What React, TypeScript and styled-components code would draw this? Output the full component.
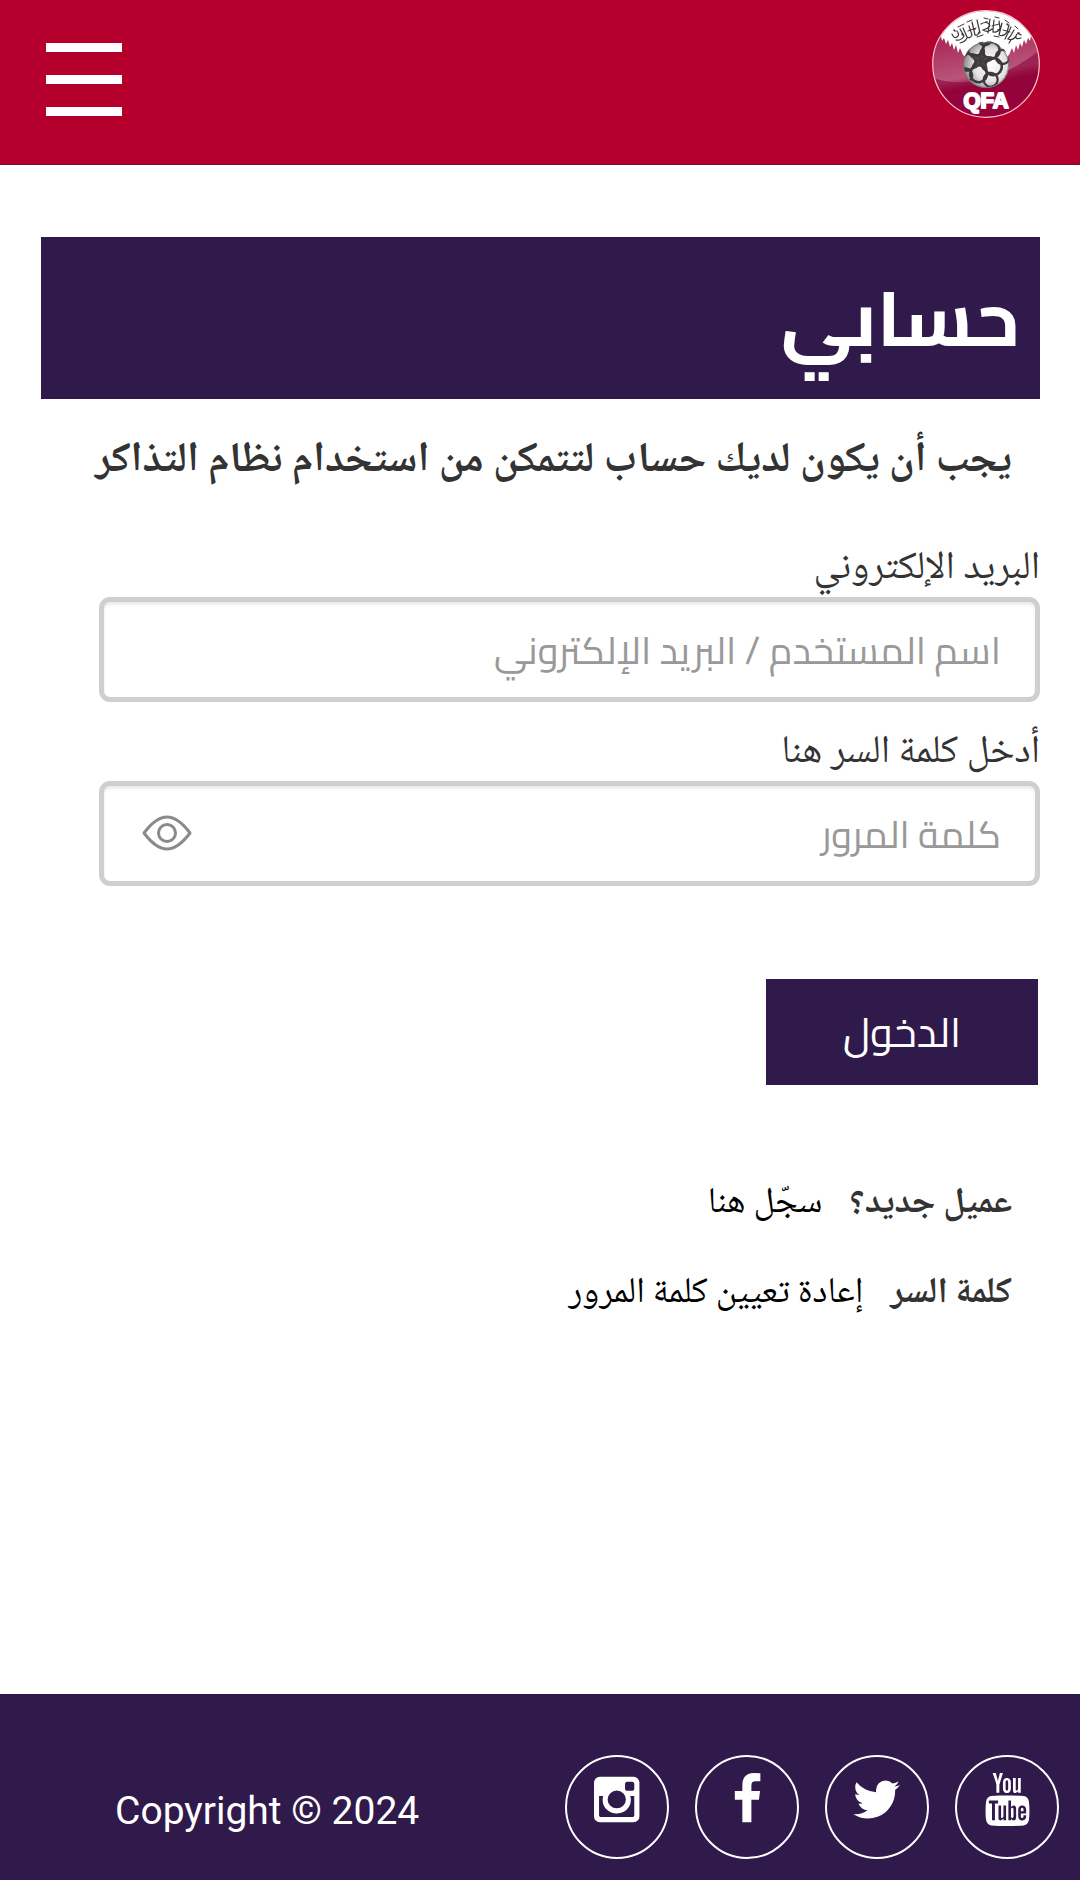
import React, { useState } from "react";
import styled, { createGlobalStyle } from "styled-components";
import { TfiYoutube } from "react-icons/tfi";

const naskh = `"Noto Naskh Arabic", "Noto Sans Arabic", "DejaVu Sans", sans-serif`;
const cairo = `Cairo, "Noto Sans Arabic", "DejaVu Sans", sans-serif`;

const color = {
  red: "#b5002d",
  purple: "#301a4b",
  text: "#333333",
  border: "#cfcfcf",
  hint: "#999999",
};

const GlobalStyle = createGlobalStyle`
  *, *::before, *::after { box-sizing: border-box; }
  body { margin: 0; background: #ffffff; color: ${color.text}; font-family: ${naskh}; }
`;

const Page = styled.div`
  display: flex;
  flex-direction: column;
  min-height: 100vh;
`;

const Header = styled.header`
  display: flex;
  flex-direction: row-reverse;
  justify-content: space-between;
  align-items: flex-start;
  height: 165px;
  padding: 10px 40px 0 46px;
  background: ${color.red};
  border-bottom: 1px solid #720d3c;
`;

const MenuButton = styled.button`
  display: flex;
  flex-direction: column;
  gap: 23px;
  width: 76px;
  margin-top: 33px;
  padding: 0;
  border: 0;
  background: none;
  cursor: pointer;
`;

const MenuBar = styled.span`
  width: 100%;
  height: 9px;
  background: #ffffff;
`;

const LogoLink = styled.a`
  display: block;
  width: 108px;
  height: 108px;

  svg { display: block; width: 100%; height: 100%; }
`;

const Main = styled.main`
  flex: 1;
  padding: 72px 40px 80px 41px;
`;

const Title = styled.h1`
  margin: 0;
  padding: 0 20px;
  background: ${color.purple};
  color: #ffffff;
  font: 700 77px/162px ${cairo};
`;

const Intro = styled.p`
  margin: 31px 28px 49px 0;
  font-size: 42px;
  line-height: 64px;
  font-weight: 700;
`;

const Form = styled.form`
  display: flex;
  flex-direction: column;
  padding-left: 58px;
`;

const Field = styled.div`
  position: relative;
  display: flex;
  flex-direction: column;
  margin-bottom: 25px;
`;

const Label = styled.label`
  font-size: 39px;
  line-height: 54px;
`;

const Input = styled.input`
  width: 100%;
  height: 105px;
  padding: 0 34px;
  border: 5px solid ${color.border};
  border-radius: 11px;
  background: #ffffff;
  box-shadow: inset 0 3px 3px rgba(0, 0, 0, 0.08);
  color: ${color.text};
  font: 400 38px/56px ${cairo};

  &::placeholder { color: ${color.hint}; opacity: 1; }
`;

const RevealButton = styled.button`
  position: absolute;
  left: 42px;
  bottom: 34px;
  padding: 0;
  border: 0;
  background: none;
  cursor: pointer;

  svg { display: block; }
`;

const Submit = styled.button`
  align-self: flex-start;
  height: 106px;
  margin: 68px 2px 0 0;
  padding: 0 77px;
  border: 0;
  background: ${color.purple};
  color: #ffffff;
  font: 400 41px/76px ${cairo};
  cursor: pointer;
`;

const Links = styled.div`
  display: flex;
  flex-direction: column;
  gap: 30px;
  margin-top: 90px;
  padding-right: 28px;
`;

const LinkRow = styled.p`
  display: flex;
  gap: 27px;
  margin: 0;
  font-size: 36px;
  line-height: 60px;

  a { color: #000000; text-decoration: none; }
`;

const Footer = styled.footer`
  display: flex;
  flex-direction: row-reverse;
  align-items: center;
  justify-content: space-between;
  padding: 61px 21px 21px 115px;
  background: ${color.purple};
  color: #ffffff;
`;

const Copyright = styled.p`
  margin: 0;
  padding-top: 8px;
  font: 400 39px/48px Roboto, "Liberation Sans", sans-serif;
`;

const Social = styled.nav`
  display: flex;
  gap: 26px;
`;

const SocialLink = styled.a`
  display: flex;
  justify-content: center;
  width: 104px;
  height: 104px;
  padding-top: 16px;
  border: 2px solid #ffffff;
  border-radius: 50%;
  color: #ffffff;

  svg { display: block; height: 53px; fill: currentColor; }
`;

/* Icon glyphs are drawn on a 1792-unit em with the y axis pointing up. */
function Glyph({ width, d }: { width: number; d: string }) {
  return (
    <svg viewBox={`0 -1536 ${width} 1792`} aria-hidden="true">
      <path transform="scale(1 -1)" d={d} />
    </svg>
  );
}

const instagram =
  "M1362 110v648h-135q20 -63 20 -131q0 -126 -64 -232.5t-174 -168.5t-240 -62q-197 0 -337 135.5t-140 327.5q0 68 20 131h-141v-648q0 -26 17.5 -43.5t43.5 -17.5h1069q25 0 43 17.5t18 43.5zM1078 643q0 124 -90.5 211.5t-218.5 87.5q-127 0 -217.5 -87.5t-90.5 -211.5t90.5 -211.5t217.5 -87.5q128 0 218.5 87.5t90.5 211.5zM1362 1003v165q0 28 -20 48.5t-49 20.5h-174q-29 0 -49 -20.5t-20 -48.5v-165q0 -29 20 -49t49 -20h174q29 0 49 20t20 49zM1536 1211v-1142q0 -81 -58 -139t-139 -58h-1142q-81 0 -139 58t-58 139v1142q0 81 58 139t139 58h1142q81 0 139 -58t58 -139z";
const facebook =
  "M959 1524v-264h-157q-86 0 -116 -36t-30 -108v-189h293l-39 -296h-254v-759h-306v759h-255v296h255v218q0 186 104 288.5t277 102.5q147 0 228 -12z";
const twitter =
  "M1620 1128q-67 -98 -162 -167q1 -14 1 -42q0 -130 -38 -259.5t-115.5 -248.5t-184.5 -210.5t-258 -146t-323 -54.5q-271 0 -496 145q35 -4 78 -4q225 0 401 138q-105 2 -188 64.5t-114 159.5q33 -5 61 -5q43 0 85 11q-112 23 -185.5 111.5t-73.5 205.5v4q68 -38 146 -41q-66 44 -105 115t-39 154q0 88 44 163q121 -149 294.5 -238.5t371.5 -99.5q-8 38 -8 74q0 134 94.5 228.5t228.5 94.5q140 0 236 -102q109 21 205 78q-37 -115 -142 -178q93 10 186 50z";

function Crest() {
  const petals = [-72, 0, 72, 144, 216].map((deg) => {
    const a = (deg * Math.PI) / 180;
    return { deg, cos: Math.cos(a), sin: Math.sin(a) };
  });
  return (
    <svg viewBox="0 0 108 108" role="img" aria-label="QFA">
      <defs>
        <linearGradient id="shade" x1="0.3" y1="0" x2="0.5" y2="1">
          <stop offset="0.15" stopColor="#a8204f" />
          <stop offset="0.6" stopColor="#b8557a" />
          <stop offset="0.7" stopColor="#96063d" />
          <stop offset="1" stopColor="#a4043f" />
        </linearGradient>
        <radialGradient id="ball" cx="0.6" cy="0.5" r="0.6">
          <stop offset="0" stopColor="#ffffff" />
          <stop offset="0.6" stopColor="#e2e2e2" />
          <stop offset="1" stopColor="#8b8587" />
        </radialGradient>
        <clipPath id="disc"><circle cx="54" cy="54" r="53" /></clipPath>
        <clipPath id="ballEdge"><circle cx="54" cy="55" r="23" /></clipPath>
      </defs>
      <circle cx="54" cy="54" r="53" fill="url(#shade)" />
      <g clipPath="url(#disc)">
        <path d="M0 68 Q52 84 108 40 V108 H0 Z" fill="#8e0339" opacity="0.6" />
        <path
          d="M0 20 L9 26 L10 31 L12 28 L14 34 L16 30 L18 37 L20 33 L22 40 L24 35 L26 43 L28 38 L31 45 L54 60 L77 45 L80 38 L82 43 L84 35 L86 40 L88 33 L90 37 L92 30 L94 34 L96 28 L98 31 L99 26 L108 20 V0 H0 Z"
          fill="#ffffff"
        />
      </g>
      <g fill="none" stroke="#3a3638" strokeWidth="1.2" strokeLinecap="round">
        <path d="M20 24q2 5 5 3t0-6M24 30q5 1 8-4l-4-7M31 18l4 9q3 2 5-2l-3-9M28 33q5-1 7-5M40 12l3 13q3 1 4-3M45 10l3 13M49 14q5-3 8 0t-6 6q5 3 9-1M58 9l-2 14M62 10q-1 8-1 12q5 1 7-4l-1-7M70 13l-3 12q5 2 8-3l2-7M79 17l-6 12M82 20q-3 6-6 9q5 2 8-3M89 25q-4-3-5 1t5 2M79 30l-2 3" />
        <path d="M26 17l6-3M35 12l5-2M52 8l4 1M63 7l4 1M73 10l4 3M36 21l8-3M60 16l7-2M71 20l7 2M45 27l6-2M62 26l5 1M83 16l3 3" strokeWidth="1" />
        <path d="M22 20l1 1M30 24l1 1M42 19l1 0M54 12l1 0M66 20l1 0M75 14l1 1M86 23l1 0" strokeWidth="1.6" />
      </g>
      <circle cx="54" cy="55" r="23" fill="url(#ball)" />
      <g clipPath="url(#ballEdge)" transform="rotate(-8 49 50)">
        {petals.map((p) => (
          <g key={p.deg} fill="none" stroke="#3d393b">
            <ellipse
              cx={49 + 6 * p.cos}
              cy={50 + 6 * p.sin}
              rx="5.5"
              ry="2.4"
              fill="#4a4648"
              strokeWidth="1"
              transform={`rotate(${p.deg} ${49 + 6 * p.cos} ${50 + 6 * p.sin})`}
            />
            <circle
              cx={49 + 14 * Math.cos(((p.deg + 36) * Math.PI) / 180)}
              cy={50 + 14 * Math.sin(((p.deg + 36) * Math.PI) / 180)}
              r="8.5"
              strokeWidth="2.6"
            />
            <circle cx={49 + 22 * p.cos} cy={50 + 22 * p.sin} r="7" strokeWidth="2.2" />
          </g>
        ))}
      </g>
      <circle cx="54" cy="55" r="22.500" fill="none" stroke="#6d6567" strokeWidth="0.8" />
      <text
        x="54"
        y="98"
        textAnchor="middle"
        fontFamily="'Liberation Sans', Arial, sans-serif"
        fontWeight="700"
        fontSize="22"
        fill="#ffffff"
        stroke="#ffffff"
        strokeWidth="2"
        strokeLinejoin="round"
      >
        QFA
      </text>
      <circle cx="54" cy="54" r="53.300" fill="none" stroke="#f7c6d2" strokeWidth="1.200" />
    </svg>
  );
}

export default function App() {
  const [revealed, setRevealed] = useState(false);

  return (
    <Page dir="rtl" lang="ar">
      <GlobalStyle />
      <Header dir="ltr">
        <LogoLink href="#home"><Crest /></LogoLink>
        <MenuButton type="button" aria-label="القائمة">
          <MenuBar />
          <MenuBar />
          <MenuBar />
        </MenuButton>
      </Header>

      <Main>
        <Title>حسابي</Title>
        <Intro>يجب أن يكون لديك حساب لتتمكن من استخدام نظام التذاكر</Intro>
        <Form onSubmit={(e) => e.preventDefault()}>
          <Field>
            <Label htmlFor="email">البريد الإلكتروني</Label>
            <Input id="email" type="text" placeholder="اسم المستخدم / البريد الإلكتروني" />
          </Field>
          <Field>
            <Label htmlFor="password">أدخل كلمة السر هنا</Label>
            <Input id="password" type={revealed ? "text" : "password"} placeholder="كلمة المرور" />
            <RevealButton type="button" aria-label="إظهار كلمة المرور" onClick={() => setRevealed(!revealed)}>
              <svg width="52" height="38" viewBox="0 0 52 38" fill="none" stroke="#8a8a8a" strokeWidth="3" strokeLinejoin="round">
                <path d="M3 19 Q15 3 26 3 T49 19 Q37 35 26 35 T3 19Z" />
                <circle cx="26" cy="19" r="8.500" />
              </svg>
            </RevealButton>
          </Field>
          <Submit type="submit">الدخول</Submit>
        </Form>
        <Links>
          <LinkRow>
            <strong>عميل جديد؟</strong>
            <a href="#register">سجّل هنا</a>
          </LinkRow>
          <LinkRow>
            <strong>كلمة السر</strong>
            <a href="#reset">إعادة تعيين كلمة المرور</a>
          </LinkRow>
        </Links>
      </Main>

      <Footer dir="ltr">
        <Social aria-label="Social">
          <SocialLink href="#instagram" aria-label="Instagram"><Glyph width={1536} d={instagram} /></SocialLink>
          <SocialLink href="#facebook" aria-label="Facebook"><Glyph width={1024} d={facebook} /></SocialLink>
          <SocialLink href="#twitter" aria-label="Twitter"><Glyph width={1664} d={twitter} /></SocialLink>
          <SocialLink href="#youtube" aria-label="YouTube"><TfiYoutube size={53} /></SocialLink>
        </Social>
        <Copyright>Copyright © 2024</Copyright>
      </Footer>
    </Page>
  );
}
